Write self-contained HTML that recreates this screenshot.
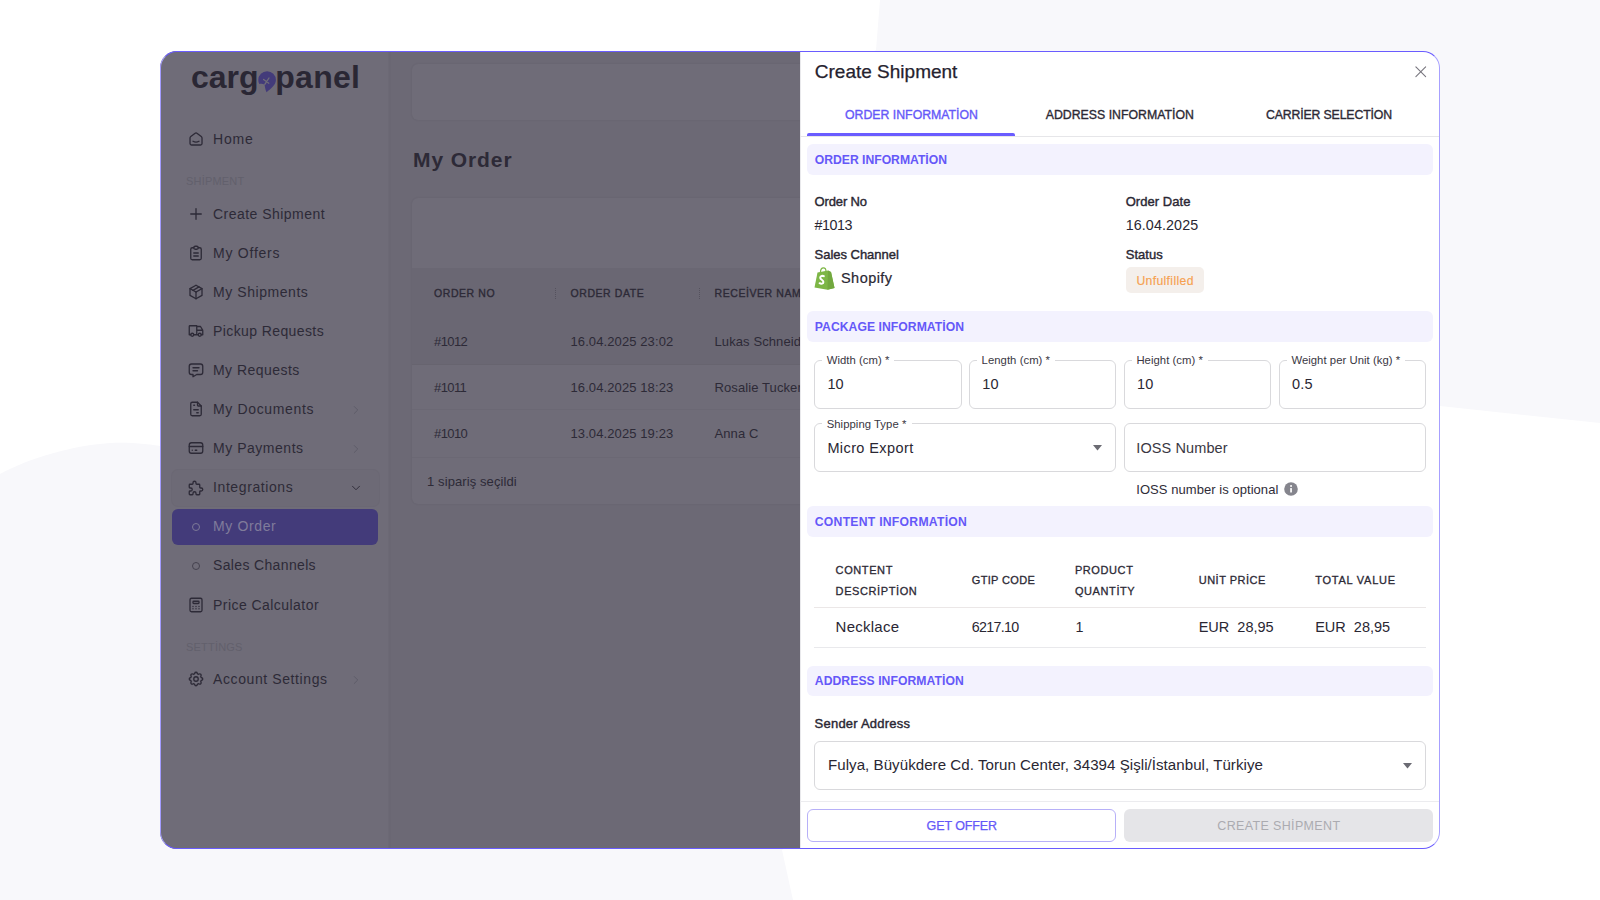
<!DOCTYPE html>
<html><head><meta charset="utf-8">
<style>
*{box-sizing:border-box;margin:0;padding:0}
html,body{width:1600px;height:900px;overflow:hidden;background:#fff;font-family:"Liberation Sans",sans-serif;position:relative}
.t{position:absolute;white-space:nowrap}
.r{position:absolute}
#frame{position:absolute;left:160px;top:51px;width:1280px;height:798px;border-radius:17px;overflow:hidden}
#pg{position:absolute;left:-160px;top:-51px;width:1600px;height:900px}
#fb{position:absolute;left:160px;top:51px;width:1280px;height:798px;border-radius:17px;border:1px solid #6a5cff;border-left-color:#a39cff;border-right-color:#a7a0ff}
</style></head><body>
<svg class="r" style="left:0;top:0" width="1600" height="900"><path d="M0 474 C30 458 70 446 110 443 C130 442 150 444 165 447 L876 50 L880 0 L1600 0 L1600 423 L1440 406 L782 850 L793 900 L0 900 Z" fill="#f8f8fb"/></svg>
<div id="frame"><div id="pg">
<div class="r" style="left:160px;top:51px;width:230px;height:798px;background:#6f6c78"></div>
<div class="r" style="left:388px;top:51px;width:4px;height:798px;background:#6c6975"></div>
<div class="r" style="left:389px;top:51px;width:2px;height:798px;background:#6a6773"></div>
<div class="r" style="left:391px;top:51px;width:409px;height:798px;background:#6c6975"></div>
<div class="t" style="left:191px;top:57px;font-size:32px;line-height:40px;font-weight:bold;color:#2a2734;letter-spacing:0px">carg</div>
<div class="t" style="left:275.2px;top:57px;font-size:32px;line-height:40px;font-weight:bold;color:#2a2734;letter-spacing:0.3px">panel</div>
<svg class="r" style="left:258px;top:71px" width="18" height="22" viewBox="0 0 18 22"><path d="M0.3 9 A8.8 8.8 0 0 1 17.9 9 C17.9 13.8 13 17.5 8.6 21.2 C7.8 20 7 17 6.6 13.8 C5.2 13 3 12.6 1.2 12.9 C0.6 11.8 0.3 10.4 0.3 9 Z" fill="#433b7a"/><path d="M5.6 8.4 L10.8 12.2 M11 7 L6.8 13.4" stroke="#6f6c78" stroke-width="1.3" stroke-linecap="round"/></svg>
<div class="r" style="left:172px;top:470px;width:207px;height:36px;border-radius:6px;background:#6d6a76;box-shadow:0 0 0 1px #6b6874"></div>
<div class="r" style="left:172px;top:509px;width:206px;height:36px;border-radius:6px;background:#433b7a"></div>
<div class="t" style="left:213px;top:130px;font-size:14px;line-height:18px;color:#2d2a37;font-weight:normal;letter-spacing:0.8px;">Home</div>
<svg class="r" style="left:187px;top:130.25px;" width="18" height="18" viewBox="0 0 24 24" fill="none" stroke="#2d2a37" stroke-width="1.75" stroke-linecap="round" stroke-linejoin="round"><path d="M19 8.71l-5.333 -4.148a2.666 2.666 0 0 0 -3.274 0l-5.334 4.148a2.665 2.665 0 0 0 -1.029 2.105v7.2a2 2 0 0 0 2 2h12a2 2 0 0 0 2 -2v-7.2c0 -.823 -.38 -1.6 -1.03 -2.105"/><path d="M16 15c-2.21 1.333 -5.792 1.333 -8 0"/></svg>
<div class="t" style="left:213px;top:205px;font-size:14px;line-height:18px;color:#2d2a37;font-weight:normal;letter-spacing:0.47px;">Create Shipment</div>
<svg class="r" style="left:187px;top:205.25px;" width="18" height="18" viewBox="0 0 24 24" fill="none" stroke="#2d2a37" stroke-width="1.75" stroke-linecap="round" stroke-linejoin="round"><path d="M12 5l0 14"/><path d="M5 12l14 0"/></svg>
<div class="t" style="left:213px;top:244px;font-size:14px;line-height:18px;color:#2d2a37;font-weight:normal;letter-spacing:0.76px;">My Offers</div>
<svg class="r" style="left:187px;top:244.29px;" width="18" height="18" viewBox="0 0 24 24" fill="none" stroke="#2d2a37" stroke-width="1.75" stroke-linecap="round" stroke-linejoin="round"><path d="M9 5h-2a2 2 0 0 0 -2 2v12a2 2 0 0 0 2 2h10a2 2 0 0 0 2 -2v-12a2 2 0 0 0 -2 -2h-2"/><path d="M9 5a2 2 0 0 1 2 -2h2a2 2 0 0 1 2 2v0a2 2 0 0 1 -2 2h-2a2 2 0 0 1 -2 -2z"/><path d="M9 12h6"/><path d="M9 16h6"/></svg>
<div class="t" style="left:213px;top:283px;font-size:14px;line-height:18px;color:#2d2a37;font-weight:normal;letter-spacing:0.56px;">My Shipments</div>
<svg class="r" style="left:187px;top:283.33000000000004px;" width="18" height="18" viewBox="0 0 24 24" fill="none" stroke="#2d2a37" stroke-width="1.75" stroke-linecap="round" stroke-linejoin="round"><path d="M12 3l8 4.5l0 9l-8 4.5l-8 -4.5l0 -9l8 -4.5"/><path d="M12 12l8 -4.5"/><path d="M12 12l0 9"/><path d="M12 12l-8 -4.5"/><path d="M16 5.25l-8 4.5"/></svg>
<div class="t" style="left:213px;top:322px;font-size:14px;line-height:18px;color:#2d2a37;font-weight:normal;letter-spacing:0.4px;">Pickup Requests</div>
<svg class="r" style="left:187px;top:322.37px;" width="18" height="18" viewBox="0 0 24 24" fill="none" stroke="#2d2a37" stroke-width="1.75" stroke-linecap="round" stroke-linejoin="round"><path d="M7 17m-2 0a2 2 0 1 0 4 0a2 2 0 1 0 -4 0"/><path d="M17 17m-2 0a2 2 0 1 0 4 0a2 2 0 1 0 -4 0"/><path d="M5 17h-2v-11a1 1 0 0 1 1 -1h9v12m-4 0h6m4 0h2v-6h-8m0 -5h5l3 5"/></svg>
<div class="t" style="left:213px;top:361px;font-size:14px;line-height:18px;color:#2d2a37;font-weight:normal;letter-spacing:0.46px;">My Requests</div>
<svg class="r" style="left:187px;top:361.41px;" width="18" height="18" viewBox="0 0 24 24" fill="none" stroke="#2d2a37" stroke-width="1.75" stroke-linecap="round" stroke-linejoin="round"><path d="M8 9h8"/><path d="M8 13h6"/><path d="M18 4a3 3 0 0 1 3 3v8a3 3 0 0 1 -3 3h-5l-5 3v-3h-2a3 3 0 0 1 -3 -3v-8a3 3 0 0 1 3 -3h12z"/></svg>
<div class="t" style="left:213px;top:400px;font-size:14px;line-height:18px;color:#2d2a37;font-weight:normal;letter-spacing:0.65px;">My Documents</div>
<svg class="r" style="left:187px;top:400.45000000000005px;" width="18" height="18" viewBox="0 0 24 24" fill="none" stroke="#2d2a37" stroke-width="1.75" stroke-linecap="round" stroke-linejoin="round"><path d="M14 3v4a1 1 0 0 0 1 1h4"/><path d="M17 21h-10a2 2 0 0 1 -2 -2v-14a2 2 0 0 1 2 -2h7l5 5v11a2 2 0 0 1 -2 2z"/><path d="M9 7l1 0"/><path d="M9 13l6 0"/><path d="M13 17l2 0"/></svg>
<div class="t" style="left:213px;top:439px;font-size:14px;line-height:18px;color:#2d2a37;font-weight:normal;letter-spacing:0.53px;">My Payments</div>
<svg class="r" style="left:187px;top:439.49px;" width="18" height="18" viewBox="0 0 24 24" fill="none" stroke="#2d2a37" stroke-width="1.75" stroke-linecap="round" stroke-linejoin="round"><path d="M3 8a3 3 0 0 1 3 -3h12a3 3 0 0 1 3 3v8a3 3 0 0 1 -3 3h-12a3 3 0 0 1 -3 -3z"/><path d="M3 10l18 0"/><path d="M7 15l.01 0"/><path d="M11 15l2 0"/></svg>
<div class="t" style="left:213px;top:478px;font-size:14px;line-height:18px;color:#2d2a37;font-weight:normal;letter-spacing:0.6px;">Integrations</div>
<svg class="r" style="left:187px;top:478.53000000000003px;" width="18" height="18" viewBox="0 0 24 24" fill="none" stroke="#2d2a37" stroke-width="1.75" stroke-linecap="round" stroke-linejoin="round"><path d="M4 7h3a1 1 0 0 0 1 -1v-1a2 2 0 0 1 4 0v1a1 1 0 0 0 1 1h3a1 1 0 0 1 1 1v3a1 1 0 0 0 1 1h1a2 2 0 0 1 0 4h-1a1 1 0 0 0 -1 1v3a1 1 0 0 1 -1 1h-3a1 1 0 0 1 -1 -1v-1a2 2 0 0 0 -4 0v1a1 1 0 0 1 -1 1h-3a1 1 0 0 1 -1 -1v-3a1 1 0 0 1 1 -1h1a2 2 0 0 0 0 -4h-1a1 1 0 0 1 -1 -1v-3a1 1 0 0 1 1 -1"/></svg>
<div class="t" style="left:213px;top:517px;font-size:14px;line-height:18px;color:#807c9a;font-weight:normal;letter-spacing:0.63px;">My Order</div>
<div class="r" style="left:192px;top:522.57px;width:8px;height:8px;border-radius:50%;border:1px solid #7d7997"></div>
<div class="t" style="left:213px;top:556px;font-size:14px;line-height:18px;color:#2d2a37;font-weight:normal;letter-spacing:0.35px;">Sales Channels</div>
<div class="r" style="left:192px;top:561.61px;width:8px;height:8px;border-radius:50%;border:1px solid #45424f"></div>
<div class="t" style="left:213px;top:596px;font-size:14px;line-height:18px;color:#2d2a37;font-weight:normal;letter-spacing:0.45px;">Price Calculator</div>
<svg class="r" style="left:187px;top:595.65px;" width="18" height="18" viewBox="0 0 24 24" fill="none" stroke="#2d2a37" stroke-width="1.75" stroke-linecap="round" stroke-linejoin="round"><path d="M4 5a2 2 0 0 1 2 -2h12a2 2 0 0 1 2 2v14a2 2 0 0 1 -2 2h-12a2 2 0 0 1 -2 -2z"/><path d="M8 8a1 1 0 0 1 1 -1h6a1 1 0 0 1 1 1v1a1 1 0 0 1 -1 1h-6a1 1 0 0 1 -1 -1z"/><path d="M8 14l0 .01"/><path d="M12 14l0 .01"/><path d="M16 14l0 .01"/><path d="M8 17l0 .01"/><path d="M12 17l0 .01"/><path d="M16 17l0 .01"/></svg>
<div class="t" style="left:213px;top:670px;font-size:14px;line-height:18px;color:#2d2a37;font-weight:normal;letter-spacing:0.6px;">Account Settings</div>
<svg class="r" style="left:187px;top:670.25px;" width="18" height="18" viewBox="0 0 24 24" fill="none" stroke="#2d2a37" stroke-width="1.75" stroke-linecap="round" stroke-linejoin="round"><path d="M10.325 4.317c.426 -1.756 2.924 -1.756 3.35 0a1.724 1.724 0 0 0 2.573 1.066c1.543 -.94 3.31 .826 2.37 2.37a1.724 1.724 0 0 0 1.065 2.572c1.756 .426 1.756 2.924 0 3.35a1.724 1.724 0 0 0 -1.066 2.573c.94 1.543 -.826 3.31 -2.37 2.37a1.724 1.724 0 0 0 -2.572 1.065c-.426 1.756 -2.924 1.756 -3.35 0a1.724 1.724 0 0 0 -2.573 -1.066c-1.543 .94 -3.31 -.826 -2.37 -2.37a1.724 1.724 0 0 0 -1.065 -2.572c-1.756 -.426 -1.756 -2.924 0 -3.35a1.724 1.724 0 0 0 1.066 -2.573c-.94 -1.543 .826 -3.31 2.37 -2.37c1 .608 2.296 .07 2.572 -1.065z"/><path d="M9 12a3 3 0 1 0 6 0a3 3 0 0 0 -6 0"/></svg>
<div class="t" style="left:186px;top:174px;font-size:11px;line-height:14px;color:#62606c;font-weight:normal;letter-spacing:0.2px;">SHİPMENT</div>
<div class="t" style="left:186px;top:640px;font-size:11px;line-height:14px;color:#62606c;font-weight:normal;letter-spacing:0.2px;">SETTİNGS</div>
<svg class="r" style="left:349px;top:402.9px;" width="14" height="14" viewBox="0 0 24 24" fill="none" stroke="#5d5a67" stroke-width="1.6" stroke-linecap="round" stroke-linejoin="round"><path d="M9 6l6 6l-6 6"/></svg>
<svg class="r" style="left:349px;top:442.0px;" width="14" height="14" viewBox="0 0 24 24" fill="none" stroke="#5d5a67" stroke-width="1.6" stroke-linecap="round" stroke-linejoin="round"><path d="M9 6l6 6l-6 6"/></svg>
<svg class="r" style="left:349px;top:673.1px;" width="14" height="14" viewBox="0 0 24 24" fill="none" stroke="#5d5a67" stroke-width="1.6" stroke-linecap="round" stroke-linejoin="round"><path d="M9 6l6 6l-6 6"/></svg>
<svg class="r" style="left:349px;top:480.5px;" width="14" height="14" viewBox="0 0 24 24" fill="none" stroke="#2d2a37" stroke-width="1.6" stroke-linecap="round" stroke-linejoin="round"><path d="M6 9l6 6l6 -6"/></svg>
<div class="r" style="left:412px;top:64px;width:420px;height:56px;border-radius:6px;background:#6f6c78;box-shadow:0 0 2px rgba(40,36,52,0.12)"></div>
<div class="t" style="left:413px;top:146px;font-size:21px;line-height:27px;color:#2d2a37;font-weight:bold;letter-spacing:0.92px;">My Order</div>
<div class="r" style="left:412px;top:198px;width:420px;height:306px;border-radius:6px;background:#6f6c78;box-shadow:0 0 2px rgba(40,36,52,0.12)"></div>
<div class="r" style="left:412px;top:268px;width:420px;height:97px;background:#6a6773"></div>
<div class="r" style="left:412px;top:409px;width:420px;height:1px;background:#6b6874"></div>
<div class="r" style="left:412px;top:457px;width:420px;height:1px;background:#6b6874"></div>
<div class="r" style="left:412px;top:364px;width:420px;height:1px;background:#67646f"></div>
<div class="t" style="left:434px;top:286px;font-size:10.5px;line-height:14px;color:#2d2a37;font-weight:normal;letter-spacing:0.57px;-webkit-text-stroke:0.35px #2d2a37">ORDER NO</div>
<div class="t" style="left:570.5px;top:286px;font-size:10.5px;line-height:14px;color:#2d2a37;font-weight:normal;letter-spacing:0.57px;-webkit-text-stroke:0.35px #2d2a37">ORDER DATE</div>
<div class="t" style="left:714.5px;top:286px;font-size:10.5px;line-height:14px;color:#2d2a37;font-weight:normal;letter-spacing:0.57px;-webkit-text-stroke:0.35px #2d2a37">RECEİVER NAME</div>
<div class="r" style="left:555px;top:288px;width:1px;height:11px;border-left:1px dotted #55525e"></div>
<div class="r" style="left:699px;top:288px;width:1px;height:11px;border-left:1px dotted #55525e"></div>
<div class="t" style="left:434px;top:333px;font-size:13px;line-height:17px;color:#2d2a37;font-weight:normal;letter-spacing:-0.6px;">#1012</div>
<div class="t" style="left:570.5px;top:333px;font-size:13px;line-height:17px;color:#2d2a37;font-weight:normal;letter-spacing:0.1px;">16.04.2025 23:02</div>
<div class="t" style="left:714.5px;top:333px;font-size:13px;line-height:17px;color:#2d2a37;font-weight:normal;letter-spacing:0.1px;">Lukas Schneider</div>
<div class="t" style="left:434px;top:379px;font-size:13px;line-height:17px;color:#2d2a37;font-weight:normal;letter-spacing:-0.6px;">#1011</div>
<div class="t" style="left:570.5px;top:379px;font-size:13px;line-height:17px;color:#2d2a37;font-weight:normal;letter-spacing:0.1px;">16.04.2025 18:23</div>
<div class="t" style="left:714.5px;top:379px;font-size:13px;line-height:17px;color:#2d2a37;font-weight:normal;letter-spacing:0.1px;">Rosalie Tucker</div>
<div class="t" style="left:434px;top:425px;font-size:13px;line-height:17px;color:#2d2a37;font-weight:normal;letter-spacing:-0.6px;">#1010</div>
<div class="t" style="left:570.5px;top:425px;font-size:13px;line-height:17px;color:#2d2a37;font-weight:normal;letter-spacing:0.1px;">13.04.2025 19:23</div>
<div class="t" style="left:714.5px;top:425px;font-size:13px;line-height:17px;color:#2d2a37;font-weight:normal;letter-spacing:0.1px;">Anna C</div>
<div class="t" style="left:427px;top:473px;font-size:13px;line-height:17px;color:#2d2a37;font-weight:normal;letter-spacing:0.1px;">1 sipariş seçildi</div>
<div class="r" style="left:800px;top:51px;width:640px;height:798px;background:#fff"></div>
<div class="r" style="left:800px;top:51px;width:1px;height:798px;background:#e9e9ec"></div>
<div class="t" style="left:814.8px;top:60px;font-size:19px;line-height:24px;color:#25222e;font-weight:normal;letter-spacing:0px;-webkit-text-stroke:0.25px #25222e">Create Shipment</div>
<svg class="r" style="left:1410.5px;top:62px;" width="19.5" height="19.5" viewBox="0 0 24 24" fill="none" stroke="#77757d" stroke-width="1.35" stroke-linecap="round" stroke-linejoin="round"><path d="M18 6l-12 12"/><path d="M6 6l12 12"/></svg>
<div class="r" style="left:800px;top:136px;width:640px;height:1px;background:#e6e6e9"></div>
<div class="r" style="left:807px;top:133px;width:208px;height:3px;background:#6a5cff;border-radius:2px 2px 0 0"></div>
<div class="t" style="left:845px;top:107px;font-size:12.3px;line-height:16px;color:#6558f8;font-weight:normal;letter-spacing:0px;-webkit-text-stroke:0.35px #6558f8">ORDER INFORMATİON</div>
<div class="t" style="left:1045.7px;top:107px;font-size:12.3px;line-height:16px;color:#2c2935;font-weight:normal;letter-spacing:0.01px;-webkit-text-stroke:0.35px #2c2935">ADDRESS INFORMATİON</div>
<div class="t" style="left:1266px;top:107px;font-size:12.3px;line-height:16px;color:#2c2935;font-weight:normal;letter-spacing:-0.15px;-webkit-text-stroke:0.35px #2c2935">CARRİER SELECTİON</div>
<div class="r" style="left:807px;top:144.2px;width:626px;height:30.6px;background:#f3f2fe;border-radius:6px"></div>
<div class="t" style="left:814.8px;top:152px;font-size:12.2px;line-height:16px;color:#6558f8;font-weight:bold;letter-spacing:-0.02px;">ORDER INFORMATİON</div>
<div class="t" style="left:814.6px;top:193px;font-size:13px;line-height:17px;color:#2a2733;font-weight:normal;letter-spacing:-0.14px;-webkit-text-stroke:0.4px #2a2733">Order No</div>
<div class="t" style="left:814.6px;top:216px;font-size:14.3px;line-height:18px;color:#2a2733;font-weight:normal;letter-spacing:-0.45px;">#1013</div>
<div class="t" style="left:1125.7px;top:193px;font-size:13px;line-height:17px;color:#2a2733;font-weight:normal;letter-spacing:0.05px;-webkit-text-stroke:0.4px #2a2733">Order Date</div>
<div class="t" style="left:1125.7px;top:216px;font-size:14.3px;line-height:18px;color:#2a2733;font-weight:normal;letter-spacing:0.1px;">16.04.2025</div>
<div class="t" style="left:814.6px;top:246px;font-size:13px;line-height:17px;color:#2a2733;font-weight:normal;letter-spacing:-0.03px;-webkit-text-stroke:0.4px #2a2733">Sales Channel</div>
<div class="t" style="left:1125.7px;top:246px;font-size:13px;line-height:17px;color:#2a2733;font-weight:normal;letter-spacing:0.05px;-webkit-text-stroke:0.4px #2a2733">Status</div>
<svg class="r" style="left:814px;top:267px" width="21" height="23" viewBox="0 0 21 23"><path d="M3.5 5.5 L14 3.5 L17 5 L20.5 21 L13.5 22.8 L0.5 20.5 Z" fill="#7db646"/><path d="M14 3.5 L17 5 L20.5 21 L13.5 22.8 Z" fill="#72a83f"/><path d="M6.5 5 C6.5 2 8 0.8 9.5 0.8 C11 0.8 12 2.2 12 4.5" stroke="#7db646" stroke-width="1.2" fill="none"/><path d="M9.8 9.2 C8.8 8.6 6.2 8.8 6.2 10.8 C6.2 12.8 9.4 12.8 9.4 15 C9.4 16.8 7.2 17.2 5.6 16.2" stroke="#fff" stroke-width="2" fill="none" stroke-linecap="round"/></svg>
<div class="t" style="left:841px;top:269px;font-size:14.5px;line-height:19px;color:#2a2733;font-weight:normal;letter-spacing:0.45px;-webkit-text-stroke:0.2px #2a2733">Shopify</div>
<div class="r" style="left:1125.5px;top:267px;width:78.3px;height:26.4px;background:#f4efeb;border-radius:5px"></div>
<div class="t" style="left:1136.4px;top:273px;font-size:12.2px;line-height:16px;color:#f6a150;font-weight:normal;letter-spacing:0.35px;-webkit-text-stroke:0.15px #f6a150">Unfulfilled</div>
<div class="r" style="left:807px;top:311.1px;width:626px;height:30.6px;background:#f3f2fe;border-radius:6px"></div>
<div class="t" style="left:814.8px;top:319px;font-size:12.2px;line-height:16px;color:#6558f8;font-weight:bold;letter-spacing:0.04px;">PACKAGE INFORMATİON</div>
<div class="r" style="left:814.4px;top:359.6px;width:147.2px;height:49.3px;border:1px solid #d9d9dc;border-radius:6px"></div>
<div class="r" style="left:822.4px;top:357.6px;width:72px;height:4px;background:#fff"></div>
<div class="t" style="left:826.6999999999999px;top:353px;font-size:11.3px;line-height:15px;color:#3a3743;font-weight:normal;letter-spacing:0.05px;">Width (cm) *</div>
<div class="t" style="left:827.4px;top:375px;font-size:14.5px;line-height:19px;color:#2a2733;font-weight:normal;letter-spacing:0.1px;">10</div>
<div class="r" style="left:969.3px;top:359.6px;width:147px;height:49.3px;border:1px solid #d9d9dc;border-radius:6px"></div>
<div class="r" style="left:977.3px;top:357.6px;width:78px;height:4px;background:#fff"></div>
<div class="t" style="left:981.5999999999999px;top:353px;font-size:11.3px;line-height:15px;color:#3a3743;font-weight:normal;letter-spacing:0.05px;">Length (cm) *</div>
<div class="t" style="left:982.3px;top:375px;font-size:14.5px;line-height:19px;color:#2a2733;font-weight:normal;letter-spacing:0.1px;">10</div>
<div class="r" style="left:1124.1px;top:359.6px;width:147.3px;height:49.3px;border:1px solid #d9d9dc;border-radius:6px"></div>
<div class="r" style="left:1132.1px;top:357.6px;width:76px;height:4px;background:#fff"></div>
<div class="t" style="left:1136.3999999999999px;top:353px;font-size:11.3px;line-height:15px;color:#3a3743;font-weight:normal;letter-spacing:0.05px;">Height (cm) *</div>
<div class="t" style="left:1137.1px;top:375px;font-size:14.5px;line-height:19px;color:#2a2733;font-weight:normal;letter-spacing:0.1px;">10</div>
<div class="r" style="left:1279.1px;top:359.6px;width:146.7px;height:49.3px;border:1px solid #d9d9dc;border-radius:6px"></div>
<div class="r" style="left:1287.1px;top:357.6px;width:118px;height:4px;background:#fff"></div>
<div class="t" style="left:1291.3999999999999px;top:353px;font-size:11.3px;line-height:15px;color:#3a3743;font-weight:normal;letter-spacing:0.05px;">Weight per Unit (kg) *</div>
<div class="t" style="left:1292.1px;top:375px;font-size:14.5px;line-height:19px;color:#2a2733;font-weight:normal;letter-spacing:0.1px;">0.5</div>
<div class="r" style="left:814.4px;top:423.3px;width:301.8px;height:49px;border:1px solid #d9d9dc;border-radius:6px"></div>
<div class="r" style="left:822.4px;top:421.3px;width:90px;height:4px;background:#fff"></div>
<div class="t" style="left:826.6999999999999px;top:417px;font-size:11.3px;line-height:15px;color:#3a3743;font-weight:normal;letter-spacing:0.05px;">Shipping Type *</div>
<div class="t" style="left:827.4px;top:439px;font-size:14.5px;line-height:19px;color:#2a2733;font-weight:normal;letter-spacing:0.4px;">Micro Export</div>
<svg class="r" style="left:1093.2px;top:445.3px" width="9" height="6" viewBox="0 0 9 6"><path d="M0 0 L9 0 L4.5 5.5 Z" fill="#6b6b73"/></svg>
<div class="r" style="left:1124.1px;top:423.3px;width:301.7px;height:49px;border:1px solid #d9d9dc;border-radius:6px"></div>
<div class="t" style="left:1136.3px;top:439px;font-size:14.5px;line-height:19px;color:#3a3743;font-weight:normal;letter-spacing:0.1px;">IOSS Number</div>
<div class="t" style="left:1136.3px;top:481px;font-size:13px;line-height:17px;color:#2f2c38;font-weight:normal;letter-spacing:0.05px;">IOSS number is optional</div>
<svg class="r" style="left:1283.5px;top:482px" width="14" height="14" viewBox="0 0 14 14"><circle cx="7" cy="7" r="6.8" fill="#85858d"/><rect x="6.2" y="6" width="1.7" height="4.6" rx=".5" fill="#fff"/><circle cx="7.05" cy="4" r="1" fill="#fff"/></svg>
<div class="r" style="left:807px;top:506.0px;width:626px;height:30.6px;background:#f3f2fe;border-radius:6px"></div>
<div class="t" style="left:814.8px;top:514px;font-size:12.2px;line-height:16px;color:#6558f8;font-weight:bold;letter-spacing:0.26px;">CONTENT INFORMATİON</div>
<div class="t" style="left:835.6px;top:563px;font-size:11px;line-height:14px;color:#2c2935;font-weight:normal;letter-spacing:0.6px;-webkit-text-stroke:0.3px #2c2935">CONTENT</div>
<div class="t" style="left:835.6px;top:584px;font-size:11px;line-height:14px;color:#2c2935;font-weight:normal;letter-spacing:0.6px;-webkit-text-stroke:0.3px #2c2935">DESCRİPTİON</div>
<div class="t" style="left:971.8px;top:573px;font-size:11px;line-height:14px;color:#2c2935;font-weight:normal;letter-spacing:0.33px;-webkit-text-stroke:0.3px #2c2935">GTIP CODE</div>
<div class="t" style="left:1074.9px;top:563px;font-size:11px;line-height:14px;color:#2c2935;font-weight:normal;letter-spacing:0.6px;-webkit-text-stroke:0.3px #2c2935">PRODUCT</div>
<div class="t" style="left:1074.9px;top:584px;font-size:11px;line-height:14px;color:#2c2935;font-weight:normal;letter-spacing:0.6px;-webkit-text-stroke:0.3px #2c2935">QUANTİTY</div>
<div class="t" style="left:1198.7px;top:573px;font-size:11px;line-height:14px;color:#2c2935;font-weight:normal;letter-spacing:0.5px;-webkit-text-stroke:0.3px #2c2935">UNİT PRİCE</div>
<div class="t" style="left:1315.2px;top:573px;font-size:11px;line-height:14px;color:#2c2935;font-weight:normal;letter-spacing:0.75px;-webkit-text-stroke:0.3px #2c2935">TOTAL VALUE</div>
<div class="r" style="left:814px;top:607.3px;width:612px;height:1px;background:#ebe7e7"></div>
<div class="r" style="left:814px;top:646.8px;width:612px;height:1px;background:#e9e9ec"></div>
<div class="t" style="left:835.6px;top:617px;font-size:15px;line-height:19px;color:#2a2733;font-weight:normal;letter-spacing:0.25px;">Necklace</div>
<div class="t" style="left:971.8px;top:618px;font-size:14.3px;line-height:18px;color:#2a2733;font-weight:normal;letter-spacing:-0.7px;">6217.10</div>
<div class="t" style="left:1075.5px;top:618px;font-size:14.3px;line-height:18px;color:#2a2733;font-weight:normal;letter-spacing:0px;">1</div>
<div class="t" style="left:1198.7px;top:618px;font-size:14.5px;line-height:19px;color:#2a2733;font-weight:normal;letter-spacing:0px;">EUR&nbsp;&nbsp;28,95</div>
<div class="t" style="left:1315.2px;top:618px;font-size:14.5px;line-height:19px;color:#2a2733;font-weight:normal;letter-spacing:0px;">EUR&nbsp;&nbsp;28,95</div>
<div class="r" style="left:807px;top:665.6px;width:626px;height:30.6px;background:#f3f2fe;border-radius:6px"></div>
<div class="t" style="left:814.8px;top:673px;font-size:12.2px;line-height:16px;color:#6558f8;font-weight:bold;letter-spacing:0.05px;">ADDRESS INFORMATİON</div>
<div class="t" style="left:814.6px;top:715px;font-size:13px;line-height:17px;color:#2a2733;font-weight:normal;letter-spacing:0.22px;-webkit-text-stroke:0.4px #2a2733">Sender Address</div>
<div class="r" style="left:814.4px;top:740.6px;width:611.2px;height:49px;border:1px solid #d9d9dc;border-radius:6px"></div>
<div class="t" style="left:828px;top:755px;font-size:15.1px;line-height:19px;color:#2a2733;font-weight:normal;letter-spacing:0.04px;">Fulya, Büyükdere Cd. Torun Center, 34394 Şişli/İstanbul, Türkiye</div>
<svg class="r" style="left:1403px;top:762.7px" width="9" height="6" viewBox="0 0 9 6"><path d="M0 0 L9 0 L4.5 5.5 Z" fill="#6b6b73"/></svg>
<div class="r" style="left:800px;top:801px;width:640px;height:1px;background:#ececef"></div>
<div class="r" style="left:807.4px;top:809px;width:309px;height:33px;border:1px solid #b7b0f8;border-radius:6px"></div>
<div class="t" style="left:926.6px;top:818px;font-size:12.5px;line-height:16px;color:#6558f8;font-weight:normal;letter-spacing:-0.1px;-webkit-text-stroke:0.25px #6558f8">GET OFFER</div>
<div class="r" style="left:1123.8px;top:808.8px;width:309.2px;height:33.2px;background:#e5e5e8;border-radius:6px"></div>
<div class="t" style="left:1217.3px;top:818px;font-size:12.5px;line-height:16px;color:#ababb0;font-weight:normal;letter-spacing:0.35px;">CREATE SHİPMENT</div>
</div></div>
<div id="fb"></div>
</body></html>
